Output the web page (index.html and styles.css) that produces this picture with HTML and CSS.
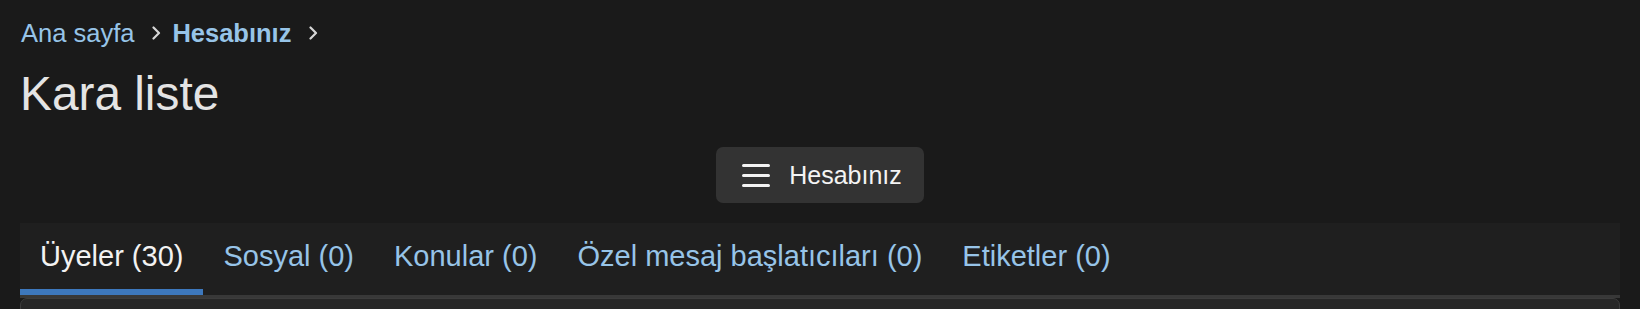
FILE: index.html
```html
<!DOCTYPE html>
<html lang="tr">
<head>
<meta charset="utf-8">
<title>Kara liste</title>
<link rel="stylesheet" href="styles.css">
</head>
<body>
<div class="page">
  <nav class="breadcrumb">
    <a class="crumb" href="#">Ana sayfa</a>
    <svg class="chev" viewBox="0 0 9 14" width="9" height="14"><path d="M1.5 1.5 L7 7 L1.5 12.5" fill="none" stroke="currentColor" stroke-width="2.2" stroke-linecap="round" stroke-linejoin="round"/></svg>
    <a class="crumb crumb-current" href="#">Hesabınız</a>
    <svg class="chev" viewBox="0 0 9 14" width="9" height="14"><path d="M1.5 1.5 L7 7 L1.5 12.5" fill="none" stroke="currentColor" stroke-width="2.2" stroke-linecap="round" stroke-linejoin="round"/></svg>
  </nav>
  <h1 class="title">Kara liste</h1>
  <div class="menu-row">
    <button class="menu-btn" type="button">
      <svg class="burger" viewBox="0 0 28 23" width="28" height="23"><path d="M1.5 1.5 H26.5 M1.5 11.5 H26.5 M1.5 21.5 H26.5" stroke="currentColor" stroke-width="3" stroke-linecap="round"/></svg>
      <span>Hesabınız</span>
    </button>
  </div>
  <div class="tabs">
    <a class="tab tab-active" href="#">Üyeler (30)</a>
    <a class="tab" href="#">Sosyal (0)</a>
    <a class="tab" href="#">Konular (0)</a>
    <a class="tab" href="#">Özel mesaj başlatıcıları (0)</a>
    <a class="tab" href="#">Etiketler (0)</a>
  </div>
  <div class="block"></div>
</div>
</body>
</html>
```
FILE: styles.css
```css
html, body {
  margin: 0;
  padding: 0;
  background: #1a1a1a;
  font-family: "Liberation Sans", Arial, sans-serif;
  overflow: hidden;
}

.page {
  padding: 18px 20px 0 20px;
}

.breadcrumb {
  display: flex;
  align-items: center;
  height: 30px;
  font-size: 25.5px;
  line-height: 30px;
}

.crumb {
  color: #97c4e8;
  text-decoration: none;
  padding-left: 1px;
}

.crumb-current {
  font-weight: bold;
  padding-left: 0;
}

.chev {
  color: #d6d6d6;
  margin: 0 11px 0 18px;
}

.title {
  margin: 18px 0 0 0;
  font-size: 47.8px;
  line-height: 56px;
  font-weight: normal;
  color: #e4e4e4;
}

.menu-row {
  display: flex;
  justify-content: center;
  margin-top: 25px;
}

.menu-btn {
  display: flex;
  align-items: center;
  gap: 19px;
  height: 56px;
  padding: 0 22px 0 26px;
  border: none;
  border-radius: 7px;
  background: #333333;
  color: #f4f4f4;
  font-family: inherit;
  font-size: 25px;
}

.burger {
  display: block;
}

.tabs {
  display: flex;
  margin-top: 20px;
  background: #1f1f1f;
  border-bottom: 3px solid #383838;
}

.tab {
  display: block;
  height: 66px;
  line-height: 66px;
  padding: 0 20px;
  font-size: 29px;
  color: #97c4e8;
  text-decoration: none;
  border-bottom: 6px solid transparent;
}

.tab-active {
  color: #f2f2f2;
  border-bottom-color: #3d78bd;
}

.block {
  height: 40px;
  background: #272727;
  border: 1px solid #3c3c3c;
  border-radius: 7px 7px 0 0;
}
```
